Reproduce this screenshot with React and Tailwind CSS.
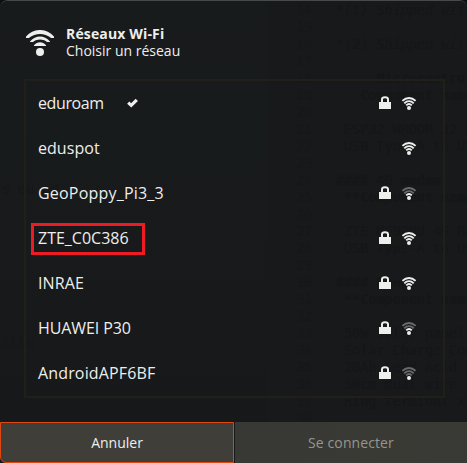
import React from "react";

const networks = [
  { name: "eduroam", track: "tracking-[-0.4px]", connected: true, locked: true, level: 3 },
  { name: "eduspot", track: "tracking-[0.05px]", locked: false, level: 3 },
  { name: "GeoPoppy_Pi3_3", track: "tracking-[0.2px]", locked: true, level: 1 },
  { name: "ZTE_C0C386", track: "tracking-[0px]", locked: true, level: 3, marked: true },
  { name: "INRAE", track: "tracking-[0.1px]", locked: true, level: 3 },
  { name: "HUAWEI P30", track: "tracking-[-0.1px]", locked: true, level: 1 },
  { name: "AndroidAPF6BF", track: "tracking-[0.15px]", locked: true, level: 0 },
];

const ghostLines = [
  ["14", "*(1) Shipped with", "italic"],
  ["15", ""],
  ["16", "*(2) Shipped with", "italic"],
  ["17", ""],
  ["18", "     Microcontrol", "font-bold"],
  ["19", "   Component name", "font-bold"],
  ["20", ""],
  ["21", " ESP32 WROOM 32 D"],
  ["22", " USB Type-A to US"],
  ["23", ""],
  ["24", "#### 4G modem", "font-bold"],
  ["25", " **Component name", "font-bold"],
  ["26", ""],
  ["27", " ZTE MF920U 4G Ro"],
  ["28", " USB Type-A to US"],
  ["29", ""],
  ["30", "#### Power", "font-bold"],
  ["31", " **Component name", "font-bold"],
  ["32", ""],
  ["33", " 50W solar panel"],
  ["34", " Solar Charge Con"],
  ["35", " 20Ah Lead Acid b"],
  ["36", " 50cm dual wire x"],
  ["37", " Ring terminal x1"],
  ["38", ""],
];

function Wifi({ level = 3, className }) {
  const shade = (n) => (level >= n ? "#eeeeec" : "#68696a");
  return (
    <svg viewBox="0 0 14 13" className={className} fill="none" strokeWidth="1.9">
      <path d="M.4 3.9C4.2.1 9.8.1 13.6 3.9" stroke={shade(3)} />
      <path d="M2.3 6.3C5.1 3.4 8.9 3.4 11.7 6.3" stroke={shade(2)} />
      <path d="M4.2 8.3C6 6.5 8 6.5 9.8 8.3" stroke={shade(1)} />
      <circle cx="7" cy="11" r="2" fill="#eeeeec" />
    </svg>
  );
}

function HeaderWifi() {
  return (
    <svg viewBox="0 0 28 26" className="h-[26px] w-7" fill="#eeeeec">
      <path d="M0 6.5C8-2.2 20-2.2 28 6.5V8H25.2C18 2.8 10 2.8 2.8 8H0Z" />
      <path d="M4 11.5C9.8 4.8 18.2 4.8 24 11.5V12H21C16.3 8.8 11.7 8.8 7 12H4Z" />
      <path d="M8 15.2C11.2 11.3 16.8 11.3 20 15.2V16H8Z" />
      <circle cx="14" cy="22" r="4" />
    </svg>
  );
}

function Lock() {
  return (
    <svg viewBox="0 0 12 13" className="h-[13px] w-3">
      <path d="M3 7V3.3C3 .6 9 .6 9 3.3V7" fill="none" stroke="#eeeeec" strokeWidth="2" />
      <path d="M0 6h12v7H0z" fill="#eeeeec" />
    </svg>
  );
}

function Check() {
  return (
    <svg viewBox="0 0 11 10" className="h-[10px] w-[11px]">
      <path d="M1.2 4.6 4.2 7.4 9.8 1.8" fill="none" stroke="#eeeeec" strokeWidth="3.2" />
    </svg>
  );
}

function Backdrop() {
  return (
    <div aria-hidden="true" className="pointer-events-none absolute inset-0 overflow-hidden bg-linear-to-b from-[#181b1c] to-[#17181a]">
      <div className="absolute top-0 left-[267px] h-full w-[200px] bg-[#17191b]" />
      <div className="absolute top-[180px] left-[2px] font-['DejaVu_Sans_Mono',monospace] text-[13.4px] leading-[17px] whitespace-pre text-[#151718]">s du ed</div>
      <div className="absolute top-[333px] left-[2px] font-['DejaVu_Sans_Mono',monospace] text-[13.4px] leading-[17px] whitespace-pre text-[#151718]">ille</div>
      <div className="absolute top-[1px] left-[296px] font-['DejaVu_Sans_Mono',monospace] text-[13.4px] leading-[17px] text-[#141618]">
        {ghostLines.map(([num, text, style]) => (
          <div key={num} className="flex h-[17px] whitespace-pre">
            <span className="w-10 text-[#151719]">{num}</span>
            <span className={style}>{text}</span>
          </div>
        ))}
      </div>
    </div>
  );
}

export default function App() {
  return (
    <div className="relative h-[463px] w-[467px] overflow-hidden bg-[#0d1012] font-['Open_Sans','Noto_Sans',sans-serif] text-[#eeeeec]">
      <div className="relative flex h-full flex-col overflow-hidden rounded-t-[8px] border-t border-[#474a4c]">
        <Backdrop />
        <header className="relative flex h-[78px] items-start pt-[24px] pl-[26px]">
          <div className="mt-[5px]"><HeaderWifi /></div>
          <div className="ml-[12px] whitespace-nowrap leading-[17px]">
            <h1 className="text-[14px] font-bold tracking-[0.15px]">Réseaux Wi-Fi</h1>
            <p className="text-[14px]">Choisir un réseau</p>
          </div>
        </header>

        <ul className="relative mx-[24px] mr-[22px] h-[319px] shrink-0 border-2 border-[#211f19]">
          {networks.map((n) => (
            <li key={n.name} className="flex h-[45px] items-center pr-[27px]">
              <div className={n.marked ? "ml-[5px] flex h-8 w-[114px] items-center border-3 border-[#ed1c24] pb-[2px] pl-[4px]" : "flex items-center pb-[2px] pl-3"}>
                <span className={`text-[16px] leading-5 whitespace-nowrap ${n.track}`}>{n.name}</span>
              </div>
              {n.connected && <div className="ml-[23px] pb-[2px]"><Check /></div>}
              <div className="ml-auto flex items-center gap-[11px] pb-[2px]">
                {n.locked && <Lock />}
                <Wifi level={n.level} className="mt-[1px] h-[13px] w-[14px]" />
              </div>
            </li>
          ))}
        </ul>

        <footer className="relative mt-auto flex h-[41px] gap-px text-[14px]">
          <button className="h-full w-[234px] rounded-bl-[6px] border border-[#e0460f] bg-[#3f3e39]">Annuler</button>
          <button className="h-full flex-1 bg-linear-to-r from-[#383934] to-[#3a3a35] tracking-[0.1px] text-[#96968f]">Se connecter</button>
        </footer>
      </div>
    </div>
  );
}
